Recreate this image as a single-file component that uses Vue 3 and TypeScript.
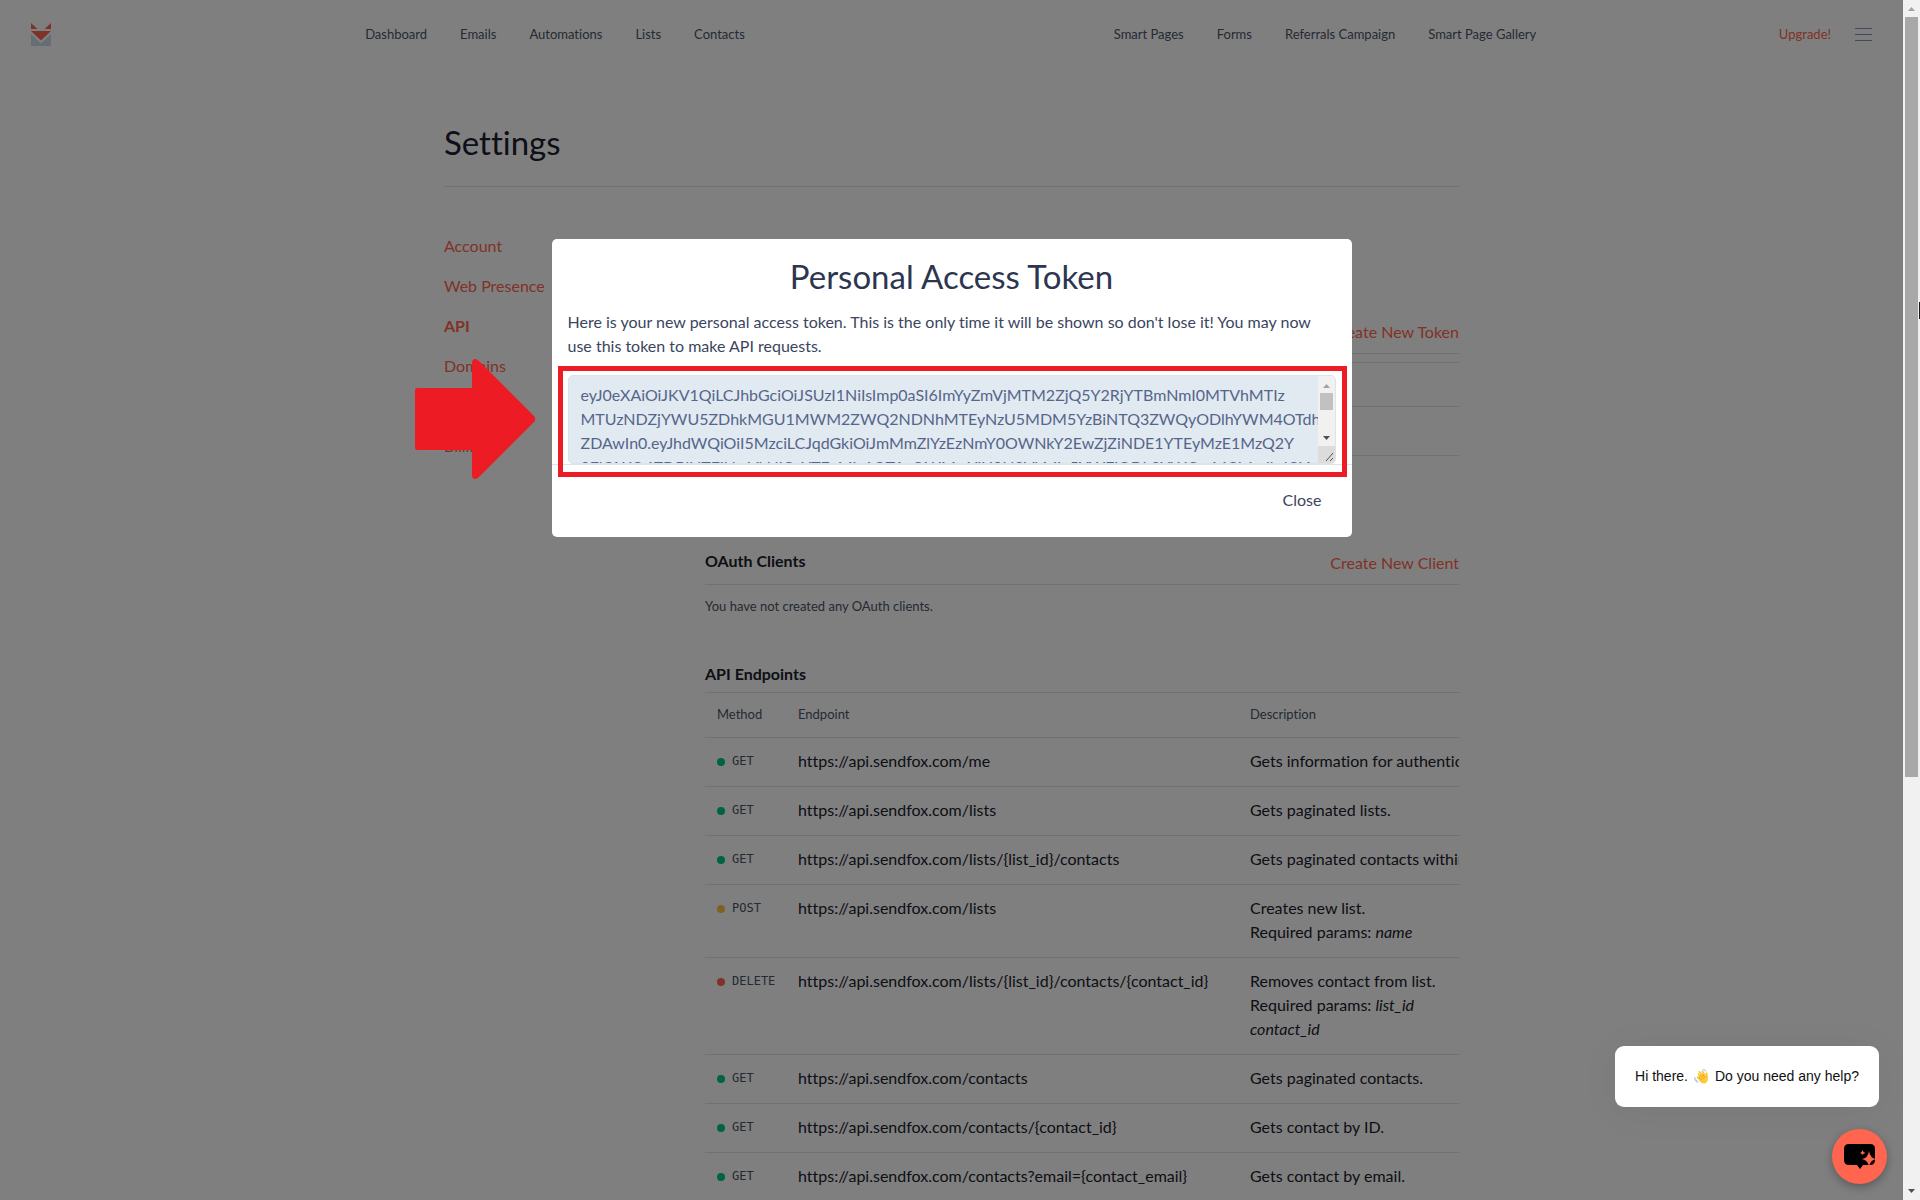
<script setup lang="ts">
interface Endpoint {
  method: 'GET' | 'POST' | 'DELETE'
  url: string
  text: string
  params?: string[]
}

const leftNav: string[] = ['Dashboard', 'Emails', 'Automations', 'Lists', 'Contacts']
const rightNav: string[] = ['Smart Pages', 'Forms', 'Referrals Campaign', 'Smart Page Gallery']
const settingsNav: string[] = ['Account', 'Web Presence', 'API', 'Domains', '', 'Billing']

const base = 'https://api.sendfox.com'
const endpoints: Endpoint[] = [
  { method: 'GET', url: '/me', text: 'Gets information for authenticated user.' },
  { method: 'GET', url: '/lists', text: 'Gets paginated lists.' },
  { method: 'GET', url: '/lists/{list_id}/contacts', text: 'Gets paginated contacts within list.' },
  { method: 'POST', url: '/lists', text: 'Creates new list.', params: ['name'] },
  {
    method: 'DELETE',
    url: '/lists/{list_id}/contacts/{contact_id}',
    text: 'Removes contact from list.',
    params: ['list_id', 'contact_id'],
  },
  { method: 'GET', url: '/contacts', text: 'Gets paginated contacts.' },
  { method: 'GET', url: '/contacts/{contact_id}', text: 'Gets contact by ID.' },
  { method: 'GET', url: '/contacts?email={contact_email}', text: 'Gets contact by email.' },
]

const token = [
  'eyJ0eXAiOiJKV1QiLCJhbGciOiJSUzI1NiIsImp0aSI6ImYyZmVjMTM2ZjQ5Y2RjYTBmNmI0MTVhMTIz',
  'MTUzNDZjYWU5ZDhkMGU1MWM2ZWQ2NDNhMTEyNzU5MDM5YzBiNTQ3ZWQyODlhYWM4OTdh',
  'ZDAwIn0.eyJhdWQiOiI5MzciLCJqdGkiOiJmMmZlYzEzNmY0OWNkY2EwZjZiNDE1YTEyMzE1MzQ2Y',
  '2FlOWQ4ZDBlNTFjNmVkNjQzYTExMjc1OTAzOWMwYjU0N2VkMjg5YWFjODk3YWQwMCIsImlhdCI6',
].join('\n')
</script>

<template>
  <div class="window">
    <div class="page">
      <header class="topbar">
        <a href="#" class="logo" aria-label="Home">
          <svg width="20" height="23" viewBox="0 0 20 23">
            <path d="M0 0 6.500 6H0zM20 0v6h-6.500z" fill="#ff654f" />
            <path d="M0 8h20L10 17.500z" fill="#ff654f" />
            <path d="M0 11 10 20.500 20 11v12H0z" fill="#cbdce8" />
          </svg>
        </a>
        <nav class="group">
          <a v-for="n in leftNav" :key="n" href="#">{{ n }}</a>
        </nav>
        <nav class="group">
          <a v-for="n in rightNav" :key="n" href="#">{{ n }}</a>
        </nav>
        <div class="account">
          <a href="#" class="upgrade">Upgrade!</a>
          <button class="menu" aria-label="Menu"><i></i><i></i><i></i></button>
        </div>
      </header>

      <main class="container">
        <h1>Settings</h1>
        <div class="columns">
          <nav class="side">
            <a v-for="n in settingsNav" :key="n" href="#" :class="{ active: n === 'API' }">{{ n }}</a>
          </nav>
          <div class="content">
            <div class="head tokens">
              <a href="#">Create New Token</a>
            </div>
            <div class="token-rows">
              <div class="token-row small"></div>
              <div class="token-row"></div>
            </div>
            <div class="head clients">
              <h2>OAuth Clients</h2>
              <a href="#">Create New Client</a>
            </div>
            <p class="empty">You have not created any OAuth clients.</p>
            <h2 class="api-title">API Endpoints</h2>
            <div class="table-wrap">
              <table>
                <thead>
                  <tr>
                    <th class="c-method">Method</th>
                    <th class="c-url">Endpoint</th>
                    <th>Description</th>
                  </tr>
                </thead>
                <tbody>
                  <tr v-for="(e, i) in endpoints" :key="i">
                    <td>
                      <span class="method"><i :class="e.method.toLowerCase()"></i>{{ e.method }}</span>
                    </td>
                    <td>{{ base + e.url }}</td>
                    <td>
                      {{ e.text }}
                      <template v-if="e.params">
                        <br />Required params:
                        <template v-for="(p, k) in e.params" :key="p"><br v-if="k > 0" /><em>{{ p }}</em></template>
                      </template>
                    </td>
                  </tr>
                </tbody>
              </table>
            </div>
          </div>
        </div>
      </main>

      <div class="overlay">
        <section class="modal" role="dialog" aria-labelledby="modal-title">
          <div class="body">
            <h2 id="modal-title">Personal Access Token</h2>
            <p><label for="token">Here is your new personal access token. This is the only time it will be shown so don't lose it! You may now<br />use this token to make API requests.</label></p>
            <div class="field">
              <textarea id="token" readonly wrap="off" :value="token"></textarea>
              <div class="field-scroll">
                <svg width="17" height="70" viewBox="0 0 17 70">
                  <path d="M5 12h7L8.500 8z" fill="#a3a3a3" />
                  <path d="M2 17h13v17H2z" fill="#c1c1c1" />
                  <path d="M5 60h7l-3.500 4z" fill="#505050" />
                </svg>
                <svg width="17" height="17" viewBox="0 0 17 17" class="grip">
                  <path d="M8 15 15 7M12 15l3-3" stroke="#555" fill="none" />
                </svg>
              </div>
            </div>
          </div>
          <footer><button>Close</button></footer>
          <div class="highlight"></div>
          <svg class="arrow" width="120" height="120" viewBox="0 0 120 120">
            <path
              d="M2 29H57V4Q57 0 60 0Q62 0 64 2L119 57Q122 60 119 63L64 118Q62 120 60 120Q57 120 57 116V91H2Q0 91 0 89V31Q0 29 2 29z"
              fill="#ed1c24"
            />
          </svg>
        </section>
      </div>

      <aside class="chat">
        <div class="bubble">
          Hi there.
          <svg width="15" height="15" viewBox="0 0 15 15">
            <path d="M4 6Q3 4 4.500 4L7 7 4.500 3Q5 1.500 6.500 2.500L9 6 7.500 2.500Q8.500 1 9.500 2.500L11.500 6 11.500 4Q12.500 2.500 13.500 4L14 9Q14 13 11 14.500Q7.500 15 5.500 12L2.500 8.500Q2.500 7 4 7.500L5 8.500z" fill="#ffc83d" />
            <path d="M4.500 8 8 11M6 6l3.500 4M8.500 5l2.500 4" stroke="#e8a22a" fill="none" />
            <path d="M1 8Q0 12 4 13.500M8.500 1Q11 0 12 2.500M2 10.500Q2 12 3.500 12" stroke="#8db8ee" fill="none" />
          </svg>
          Do you need any help?
        </div>
        <button class="launcher" aria-label="Open chat">
          <svg width="32" height="27" viewBox="0 0 32 27">
            <path d="M5 1H26Q31 1 31 6V17Q31 22 26 22H19L16 26 13 22H5Q0 22 0 17V6Q0 1 5 1z" fill="#000" />
            <path d="M25 8Q26 15 32 16Q26 17 25 24Q24 17 18 16Q24 15 25 8zM18.500 7Q19 9.500 21.500 10Q19 10.500 18.500 12Q18 10.500 16 10Q18 9.500 18.500 7z" fill="#ff654f" />
          </svg>
        </button>
      </aside>
    </div>

    <div class="scrollbar">
      <svg width="17" height="17" viewBox="0 0 17 17"><path d="M5 11h7L8.500 7z" fill="#a3a3a3" /></svg>
      <div class="thumb"></div>
      <div class="track"></div>
      <svg width="17" height="17" viewBox="0 0 17 17"><path d="M5 6h7l-3.500 4z" fill="#505050" /></svg>
      <div class="caret"></div>
    </div>
  </div>
</template>

<style>
body {
  margin: 0;
  overflow: hidden;
}
</style>

<style scoped>
* {
  box-sizing: border-box;
}
.window {
  display: flex;
  height: 100vh;
  overflow: hidden;
  font-family: Lato, sans-serif;
  font-size: 16px;
  font-variant-ligatures: none;
  line-height: 24px;
  color: #1a202c;
}
.page {
  position: relative;
  flex: 1;
  min-width: 0;
  overflow: hidden;
  background: #fff;
}
a {
  color: #ff654f;
  text-decoration: none;
}
h1,
h2,
p {
  margin: 0;
}
h2 {
  font-size: 16px;
  font-weight: 700;
}
button {
  border: 0;
  padding: 0;
  background: none;
  font: inherit;
  color: inherit;
}
.topbar {
  display: flex;
  align-items: center;
  height: 68px;
  font-size: 13px;
}
.logo {
  display: flex;
  width: 170px;
  padding-left: 31px;
}
.group {
  display: flex;
  flex: 1;
  justify-content: center;
  gap: 33px;
}
.group a {
  color: #4a5568;
}
.account {
  display: flex;
  justify-content: flex-end;
  align-items: center;
  gap: 24px;
  width: 193px;
  padding-right: 31px;
}
.menu {
  display: flex;
  flex-direction: column;
  gap: 5px;
  width: 17px;
}
.menu i {
  height: 1px;
  background: #8492b4;
}
.container {
  max-width: 1015px;
  margin: 0 auto;
}
h1 {
  padding: 54px 0 24px;
  border-bottom: 1px solid #dae4e9;
  font-size: 33px;
  font-weight: 400;
  line-height: 40px;
}
.columns {
  display: flex;
}
.side {
  display: flex;
  flex-direction: column;
  width: 261px;
  padding-top: 39px;
}
.side a {
  height: 40px;
  line-height: 40px;
}
.side .active {
  font-weight: 700;
}
.content {
  flex: 1;
  min-width: 0;
  padding-top: 125px;
}
.head {
  display: flex;
  align-items: center;
  height: 42px;
  padding-bottom: 2px;
  border-bottom: 1px solid #dae4e9;
}
.head h2 {
  padding-bottom: 4px;
}
.head a {
  margin-left: auto;
}
.token-rows {
  margin-top: 8px;
  border-top: 1px solid #dae4e9;
}
.token-row {
  height: 49px;
  border-bottom: 1px solid #dae4e9;
}
.token-row.small {
  height: 44px;
}
.clients {
  margin-top: 87px;
}
.empty {
  padding: 9px 0 44px;
  font-size: 13px;
  color: #4a5568;
}
.api-title {
  padding-bottom: 6px;
}
.table-wrap {
  overflow: hidden;
}
table {
  width: 820px;
  border-collapse: separate;
  border-spacing: 0;
  table-layout: fixed;
  white-space: nowrap;
}
th,
td {
  padding: 11px 12px 13px;
  border-top: 1px solid #dae4e9;
  text-align: left;
  vertical-align: top;
}
th {
  height: 45px;
  padding: 9px 12px 11px;
  font-size: 13px;
  font-weight: 400;
  color: #4a5568;
}
.c-method {
  width: 81px;
}
.c-url {
  width: 452px;
}
.method {
  display: flex;
  align-items: center;
  gap: 7px;
  padding-top: 1px;
  font-family: "DejaVu Sans Mono", monospace;
  font-size: 12px;
  line-height: 23px;
  color: #4a5568;
}
.method i {
  flex: none;
  width: 8px;
  height: 8px;
  border-radius: 50%;
}
.get {
  background: #00c48c;
}
.post {
  background: #ffc048;
}
.delete {
  background: #ff654f;
}
.overlay {
  position: absolute;
  inset: 0;
  padding-top: 239px;
  background: rgba(0, 0, 0, 0.5);
}
.modal {
  position: relative;
  width: 800px;
  margin: 0 auto;
  border-radius: 5px;
  background: #fff;
  color: #3b4560;
}
.modal h2 {
  padding: 17px 0 11px;
  font-size: 33px;
  font-weight: 400;
  line-height: 40px;
  text-align: center;
  color: #2d3550;
}
.body {
  padding: 0 16px;
  border-bottom: 1px solid #dae4e9;
}
.body p {
  padding: 3px 0 17px;
}
.field {
  display: flex;
  height: 89px;
  overflow: hidden;
  border: 1px solid #dae4e9;
  border-radius: 5px;
  background: #e1eaf1;
}
textarea {
  flex: 1;
  min-width: 0;
  margin: 0;
  padding: 7px 0 0 12px;
  border: 0;
  outline: 0;
  resize: none;
  overflow: hidden;
  background: none;
  font: inherit;
  color: #56658a;
  white-space: pre;
}
.field-scroll {
  display: flex;
  flex-direction: column;
  width: 17px;
  background: #f1f1f1;
}
.grip {
  background: #dcdcdc;
}
footer {
  display: flex;
  justify-content: flex-end;
  padding: 23px 30px 25px;
}
.highlight {
  position: absolute;
  top: 127px;
  right: 5px;
  left: 6px;
  height: 111px;
  border: 5px solid #ed1c24;
  pointer-events: none;
}
.arrow {
  position: absolute;
  top: 120px;
  left: -137px;
}
.chat {
  position: absolute;
  right: 16px;
  bottom: 16px;
  display: flex;
  flex-direction: column;
  align-items: flex-end;
  gap: 22px;
}
.bubble {
  display: flex;
  align-items: center;
  gap: 6px;
  height: 61px;
  margin-right: 8px;
  padding: 0 20px 1px;
  border-radius: 9px;
  background: #fff;
  box-shadow: 0 4px 40px rgba(0, 0, 0, 0.05);
  font-family: "Liberation Sans", sans-serif;
  font-size: 14px;
  color: #111;
}
.launcher {
  display: grid;
  place-items: center;
  width: 55px;
  height: 55px;
  border-radius: 50%;
  background: #ff654f;
  box-shadow: 0 3px 10px rgba(0, 0, 0, 0.3);
}
.scrollbar {
  position: relative;
  display: flex;
  flex-direction: column;
  width: 17px;
  background: #f1f1f1;
}
.thumb {
  flex: 15;
  margin: 0 2px;
  background: #a8a8a8;
}
.track {
  flex: 8;
}
.caret {
  position: absolute;
  top: 302px;
  right: 0;
  width: 1px;
  height: 17px;
  background: #1a1a22;
}
</style>
